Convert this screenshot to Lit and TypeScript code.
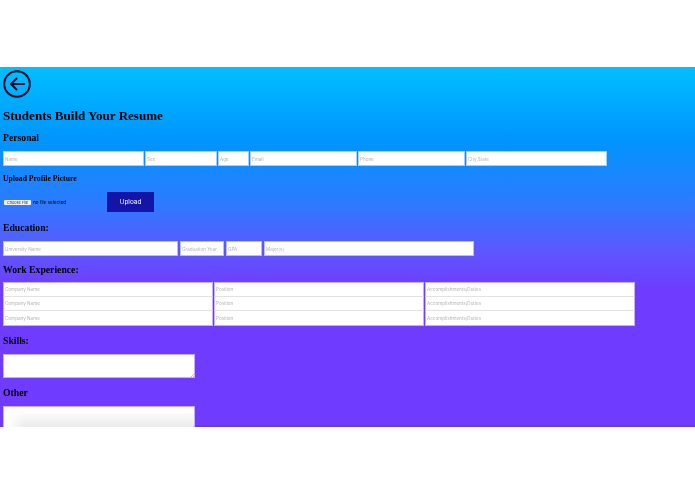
import { LitElement, html, css } from "lit";
import { customElement } from "lit/decorators.js";

@customElement("app-root")
export class AppRoot extends LitElement {
  static styles = css`
    :host { display: block; width: 695px; height: 494px; background: #fff; font-family: "Liberation Serif", serif; color: #000; }
    * { box-sizing: border-box; }
    .page { display: grid; grid-template-rows: 67px 360px 67px; height: 494px; overflow: hidden; }
    .main {
      grid-row: 2; overflow: hidden; display: flex; flex-direction: column; align-items: flex-start;
      padding: 3px 0 0 3px; filter: blur(0.4px);
      background: linear-gradient(180deg, #00bfff 0, #0095ff 20%, #2a7cff 37%, #5f55ff 52%, #6e3bff 62%, #6e3bff 99.3%, #6238e0 100%);
    }
    .back { display: block; width: 28px; height: 28px; flex: none; }
    h1 { margin: 9px 0 0; font-size: 13.05px; line-height: 17px; font-weight: bold; }
    h2 { margin: 0; font-size: 9.7px; line-height: 12px; font-weight: bold; }
    h3 { margin: 0; font-size: 7.7px; line-height: 10px; font-weight: bold; }
    .personal { margin-top: 8px; }
    .row { display: grid; margin-top: 7px; }
    .r1 { grid-template-columns: 141px 72px 31px 107px 107px 141px; column-gap: 1px; }
    .r2 { grid-template-columns: 175px 44px 36px 210px; column-gap: 2px; }
    .r3 { grid-template-columns: 210px 210px 210px; column-gap: 1px; margin-top: 6px; }
    input {
      display: block; width: 100%; height: 15px; margin: 0; padding: 1px 1px 0; min-width: 0;
      border: 1px solid rgba(255,255,255,.6); background: #fff; background-clip: padding-box;
      font: 4.6px Inter, "Liberation Sans", sans-serif; outline: none; border-radius: 0;
    }
    input::placeholder { color: #b5b5b5; opacity: 1; }
    .r3 input { height: 14.67px; border-width: 0 1px; border-bottom: 1px solid #e2e2e2; }
    .r3 input.first { border-top: 1px solid rgba(255,255,255,.6); }
    .r3 input.last { border-bottom: 1px solid rgba(255,255,255,.6); }
    .upload-title { margin-top: 8px; }
    .upload { display: flex; align-items: center; margin-top: 8px; height: 20px; }
    .file { display: flex; align-items: center; width: 104px; padding-left: 1px; font: 4.6px Inter, "Liberation Sans", sans-serif; }
    .choose { width: 27px; height: 5px; line-height: 5px; text-align: center; background: #f0f0f0; border-radius: 1px; font-size: 3.8px; margin-right: 2px; color: #333; }
    .upload-btn { width: 47px; height: 20px; border: 0; padding: 0; background: #1414a8; color: #fff; font: 6.4px Inter, "Liberation Sans", sans-serif; }
    .edu { margin-top: 10px; }
    .work { margin-top: 8px; }
    .skills { margin-top: 9px; }
    .other { margin-top: 9px; }
    .ta { display: block; width: 192px; height: 24px; margin-top: 7px; position: relative; background: #fff; border: 1px solid rgba(255,255,255,.6); background-clip: padding-box; flex: none; }
    .grip { position: absolute; right: 0; bottom: 0; width: 4px; height: 4px; background: linear-gradient(135deg, transparent 55%, #c4c4c4 55%, #c4c4c4 70%, transparent 70%, transparent 82%, #c4c4c4 82%); }
    .shade { background-image: linear-gradient(90deg, #fff 2%, rgba(255,255,255,0) 11%), linear-gradient(180deg, #fff 15%, #ededed 80%); }
  `;

  private ph(list: string[], cls = "") {
    return list.map((p) => html`<input class=${cls} placeholder=${p} />`);
  }

  render() {
    const rows = ["first", "", "last"];
    return html`
      <div class="page">
        <div class="main">
          <svg class="back" viewBox="0 0 28 28" fill="none" stroke="#0a0a2a" stroke-width="2" stroke-linecap="round" stroke-linejoin="round">
            <circle cx="14" cy="14" r="12.8"></circle>
            <path d="M21 14H8M13.5 8.5 8 14l5.5 5.5"></path>
          </svg>
          <h1>Students Build Your Resume</h1>
          <h2 class="personal">Personal</h2>
          <div class="row r1">${this.ph(["Name", "Sex", "Age", "Email", "Phone", "City,State"])}</div>
          <h3 class="upload-title">Upload Profile Picture</h3>
          <div class="upload">
            <div class="file"><span class="choose">Choose File</span><span>no file selected</span></div>
            <button class="upload-btn">Upload</button>
          </div>
          <h2 class="edu">Education:</h2>
          <div class="row r2">${this.ph(["University Name", "Graduation Year", "GPA", "Major(s)"])}</div>
          <h2 class="work">Work Experience:</h2>
          <div class="row r3">
            ${rows.map((c) => this.ph(["Company Name", "Position", "Accomplishments/Duties"], c))}
          </div>
          <h2 class="skills">Skills:</h2>
          <div class="ta"><span class="grip"></span></div>
          <h2 class="other">Other</h2>
          <div class="ta shade"><span class="grip"></span></div>
        </div>
      </div>
    `;
  }
}
